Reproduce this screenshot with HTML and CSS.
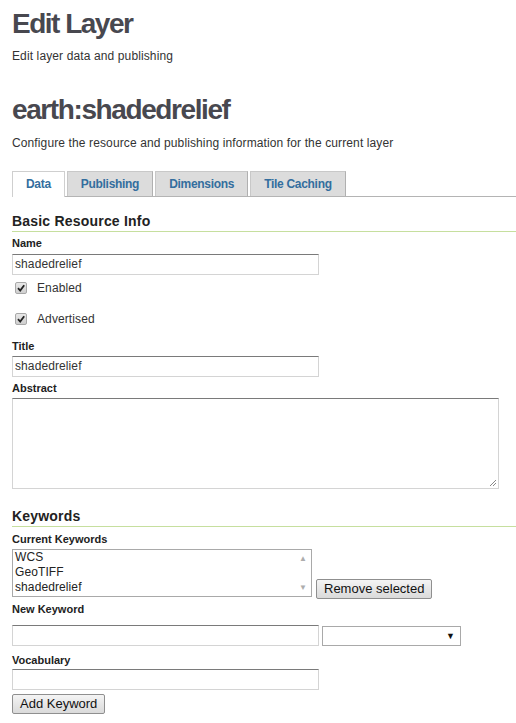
FILE: index.html
```html
<!DOCTYPE html>
<html>
<head>
<meta charset="utf-8">
<link rel="stylesheet" href="styles.css">
</head>
<body>
<div class="page">
  <h1 class="title">Edit Layer</h1>
  <p class="subtitle">Edit layer data and publishing</p>
  <h2 class="layer-name">earth:shadedrelief</h2>
  <p class="desc">Configure the resource and publishing information for the current layer</p>

  <ul class="tabs">
    <li class="tab active">Data</li>
    <li class="tab">Publishing</li>
    <li class="tab">Dimensions</li>
    <li class="tab">Tile Caching</li>
  </ul>

  <h3 class="section first">Basic Resource Info</h3>
  <div class="lbl lbl-name">Name</div>
  <div class="input in-name">shadedrelief</div>

  <div class="check row-enabled"><span class="box"><svg width="10" height="10" viewBox="0 0 10 10"><path d="M2 5.2 L4.2 7.5 L8.2 2.2" stroke="#222" stroke-width="1.8" fill="none"/></svg></span><span class="check-text">Enabled</span></div>
  <div class="check row-adv"><span class="box"><svg width="10" height="10" viewBox="0 0 10 10"><path d="M2 5.2 L4.2 7.5 L8.2 2.2" stroke="#222" stroke-width="1.8" fill="none"/></svg></span><span class="check-text">Advertised</span></div>

  <div class="lbl lbl-title">Title</div>
  <div class="input in-title">shadedrelief</div>

  <div class="lbl lbl-abstract">Abstract</div>
  <div class="textarea">
    <svg class="grip" width="8" height="8" viewBox="0 0 8 8"><path d="M7 1 L1 7 M7 4 L4 7" stroke="#888" stroke-width="1" fill="none"/></svg>
  </div>

  <h3 class="section kw">Keywords</h3>
  <div class="lbl lbl-cur">Current Keywords</div>
  <div class="kw-row">
    <div class="listbox">
      <div class="items">
        <div class="item">WCS</div>
        <div class="item">GeoTIFF</div>
        <div class="item">shadedrelief</div>
      </div>
      <div class="scroll">
        <span class="arr">&#9650;</span>
        <span class="arr">&#9660;</span>
      </div>
    </div>
    <div class="btn btn-remove">Remove selected</div>
  </div>

  <div class="lbl lbl-new">New Keyword</div>
  <div class="new-row">
    <div class="input in-new"></div>
    <div class="select"><span class="sel-arrow">&#9660;</span></div>
  </div>

  <div class="lbl lbl-vocab">Vocabulary</div>
  <div class="input in-vocab"></div>
  <div class="btn btn-add">Add Keyword</div>
</div>
</body>
</html>
```

FILE: styles.css
```css
html, body {
  margin: 0;
  padding: 0;
  background: #fff;
}
body {
  font-family: "Liberation Sans", Arial, sans-serif;
  color: #333;
}
.page {
  padding: 0 12px;
}
.title {
  margin: 0;
  padding-top: 2px;
  font-size: 28px;
  line-height: 44px;
  font-weight: bold;
  letter-spacing: -1.5px;
  color: #48484f;
}
.subtitle {
  margin: 3px 0 0;
  font-size: 12px;
  line-height: 15px;
  letter-spacing: 0.12px;
  color: #333;
}
.layer-name {
  margin: 29px 0 0;
  font-size: 28px;
  line-height: 34px;
  font-weight: bold;
  letter-spacing: -1.4px;
  color: #48484f;
}
.desc {
  margin: 9px 0 0;
  font-size: 12px;
  line-height: 15px;
  letter-spacing: 0.12px;
}
.tabs {
  list-style: none;
  margin: 20px -12px 0 0;
  padding: 0;
  display: flex;
  gap: 2px;
  border-bottom: 1px solid #b4b4b4;
  height: 25px;
}
.tab {
  height: 25px;
  box-sizing: border-box;
  padding: 0 13px;
  line-height: 25px;
  font-size: 12px;
  font-weight: bold;
  letter-spacing: -0.3px;
  color: #336e9e;
  background: #dcdcdc;
  border: 1px solid #c8c8c8;
  border-bottom: none;
  border-right-color: #b0b0b0;
}
.tab.active {
  background: #fff;
  border-color: #cfcfcf;
  height: 26px;
}
.section {
  margin: 15px -12px 0 0;
  font-size: 14px;
  line-height: 18px;
  font-weight: bold;
  letter-spacing: 0.2px;
  color: #222;
  padding-bottom: 1px;
  border-bottom: 1px solid #c6df9e;
}
.section.kw {
  margin-top: 18px;
}
.lbl {
  font-size: 11px;
  line-height: 14px;
  font-weight: bold;
  color: #222;
}
.lbl-name { margin-top: 4px; }
.lbl-title { margin-top: 10px; }
.lbl-abstract { margin-top: 4px; }
.lbl-cur { margin-top: 5px; }
.lbl-new { margin-top: 5px; }
.lbl-vocab { margin-top: 7px; }

.input {
  box-sizing: border-box;
  width: 307px;
  height: 21px;
  border: 1px solid #d4d4d4;
  border-top-color: #7a7a7a;
  padding: 0 2px;
  font-size: 12px;
  line-height: 19px;
  letter-spacing: 0.1px;
  color: #333;
  background: #fff;
}
.in-name { margin-top: 4px; }
.in-title { margin-top: 3px; }
.in-vocab { margin-top: 2px; }

.check {
  display: flex;
  align-items: center;
  height: 20px;
  font-size: 12px;
}
.row-enabled { margin-top: 3px; }
.row-adv { margin-top: 11px; }
.box {
  box-sizing: border-box;
  width: 12px;
  height: 12px;
  margin-left: 3px;
  border: 1px solid #a8a8a8;
  border-radius: 2px;
  background: linear-gradient(#e8e8e8, #cfcfcf);
  display: flex;
  align-items: center;
  justify-content: center;
}
.check-text {
  margin-left: 10px;
  letter-spacing: 0.1px;
  color: #333;
}

.textarea {
  position: relative;
  box-sizing: border-box;
  margin-top: 3px;
  width: 487px;
  height: 91px;
  border: 1px solid #d4d4d4;
  border-top-color: #7a7a7a;
  background: #fff;
}
.grip {
  position: absolute;
  right: 1px;
  bottom: 1px;
}

.kw-row {
  display: flex;
  align-items: flex-end;
  margin-top: 3px;
}
.listbox {
  box-sizing: border-box;
  width: 300px;
  height: 48px;
  border: 1px solid #a9a9a9;
  display: flex;
  background: #fff;
}
.items {
  flex: 1;
  padding-left: 2px;
  font-size: 12px;
  line-height: 15px;
  letter-spacing: 0.1px;
  color: #222;
}
.scroll {
  width: 16px;
  display: flex;
  flex-direction: column;
  justify-content: space-between;
  align-items: center;
  padding: 5px 0 4px;
  box-sizing: border-box;
}
.arr {
  font-size: 8px;
  line-height: 8px;
  color: #adadad;
}
.btn {
  box-sizing: border-box;
  height: 20px;
  padding: 0 7px;
  border: 1px solid #8f8f8f;
  border-radius: 2px;
  background: linear-gradient(#f4f4f4, #dadada);
  font-size: 13px;
  line-height: 18px;
  color: #111;
  white-space: nowrap;
}
.btn-remove {
  margin-left: 4px;
  margin-bottom: -2px;
}
.btn-add {
  display: inline-block;
  margin-top: 4px;
}

.new-row {
  display: flex;
  align-items: flex-start;
  margin-top: 9px;
  gap: 3px;
}
.select {
  box-sizing: border-box;
  margin-top: 1px;
  width: 139px;
  height: 20px;
  border: 1px solid #a9a9a9;
  background: #fff;
  display: flex;
  justify-content: flex-end;
  align-items: center;
  padding-right: 5px;
}
.sel-arrow {
  font-size: 9px;
  color: #111;
}
```
